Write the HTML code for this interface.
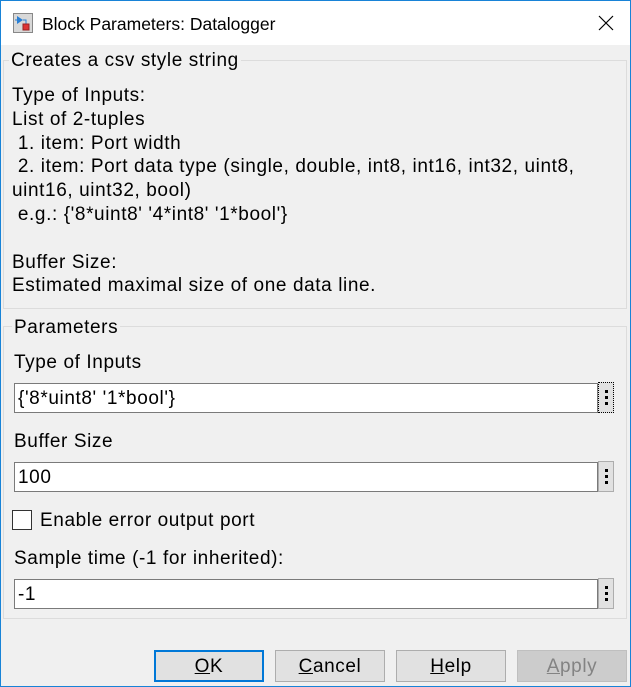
<!DOCTYPE html>
<html><head><style>
*{margin:0;padding:0;box-sizing:border-box}
body{width:631px;height:687px;background:#f0f0f0;font-family:"Liberation Sans",sans-serif;font-size:19px;letter-spacing:0.6px;color:#000;position:relative;overflow:hidden}
.a{position:absolute;white-space:nowrap}
.win{position:absolute;left:0;top:0;width:631px;height:687px;border:1px solid #1883d7;border-top:none}
.title{position:absolute;left:0;top:0;width:631px;height:45px;background:#fff;border-top:1px solid #1883d7;border-left:1px solid #1883d7;border-right:1px solid #1883d7;letter-spacing:0;font-size:17.5px}
.grp{position:absolute;border:1px solid #dcdcdc}
.lg{position:absolute;background:#f0f0f0;padding:0 2px;white-space:nowrap}
.inp{position:absolute;background:#fff;border:1px solid #7a7a7a;padding-left:3px;line-height:30px}
.dot{position:absolute;width:16px;height:31px;background:#e1e1e1;border:1px solid #adadad;display:flex;flex-direction:column;align-items:center;justify-content:center;gap:3px}
.dot i{width:3px;height:3px;background:#000;display:block}
.btn{position:absolute;top:650px;height:32px;width:110px;background:#e1e1e1;border:1px solid #adadad;text-align:center;line-height:32px}
u{text-decoration:underline}
</style></head><body>
<div class="title">
<svg class="a" style="left:12px;top:12px" width="20" height="20" viewBox="0 0 20 20"><rect x="0.5" y="0.5" width="19" height="19" fill="#d8d8d8" stroke="#888"/><path d="M4 3 L4 11 L10 7 Z" fill="#2a7fd4"/><path d="M2 7 H4 M10 7 H13 V11" stroke="#2a7fd4" fill="none"/><rect x="10" y="11" width="6" height="6" fill="#d33" stroke="#922"/></svg>
<div class="a" style="left:41px;top:13px">Block Parameters: Datalogger</div>
<svg class="a" style="left:597px;top:14px" width="16" height="16"><path d="M1 1 L15 15 M15 1 L1 15" stroke="#000" stroke-width="1.2"/></svg>
</div>
<div class="win"></div>
<div class="grp" style="left:3px;top:60px;width:624px;height:249px"></div>
<div class="lg" style="left:9px;top:50px">Creates a csv style string</div>
<div class="a" style="left:12px;top:84px;line-height:23.8px">Type of Inputs:<br>List of 2-tuples<br>&nbsp;1. item: Port width<br>&nbsp;2. item: Port data type (single, double, int8, int16, int32, uint8,<br>uint16, uint32, bool)<br>&nbsp;e.g.: {'8*uint8' '4*int8' '1*bool'}<br><br>Buffer Size:<br>Estimated maximal size of one data line.</div>
<div class="grp" style="left:3px;top:326px;width:624px;height:293px"></div>
<div class="lg" style="left:12px;top:317px">Parameters</div>
<div class="a" style="left:14px;top:352px">Type of Inputs</div>
<div class="inp" style="left:14px;top:383px;width:584px;height:30px">{'8*uint8' '1*bool'}</div>
<div class="dot" style="left:598px;top:382px;border:1px dotted #000"><i></i><i></i><i></i></div>
<div class="a" style="left:14px;top:431px">Buffer Size</div>
<div class="inp" style="left:14px;top:462px;width:584px;height:30px">100</div>
<div class="dot" style="left:598px;top:461px"><i></i><i></i><i></i></div>
<div class="a" style="left:12px;top:510px;width:20px;height:20px;background:#fff;border:1px solid #333"></div>
<div class="a" style="left:40px;top:510px">Enable error output port</div>
<div class="a" style="left:14px;top:548px">Sample time (-1 for inherited):</div>
<div class="inp" style="left:14px;top:579px;width:584px;height:30px">-1</div>
<div class="dot" style="left:598px;top:578px"><i></i><i></i><i></i></div>
<div class="btn" style="left:154px;border:2px solid #0078d7;line-height:30px"><u>O</u>K</div>
<div class="btn" style="left:275px"><u>C</u>ancel</div>
<div class="btn" style="left:396px"><u>H</u>elp</div>
<div class="btn" style="left:517px;background:#ccc;border-color:#bfbfbf;color:#838383"><u>A</u>pply</div>
</body></html>
